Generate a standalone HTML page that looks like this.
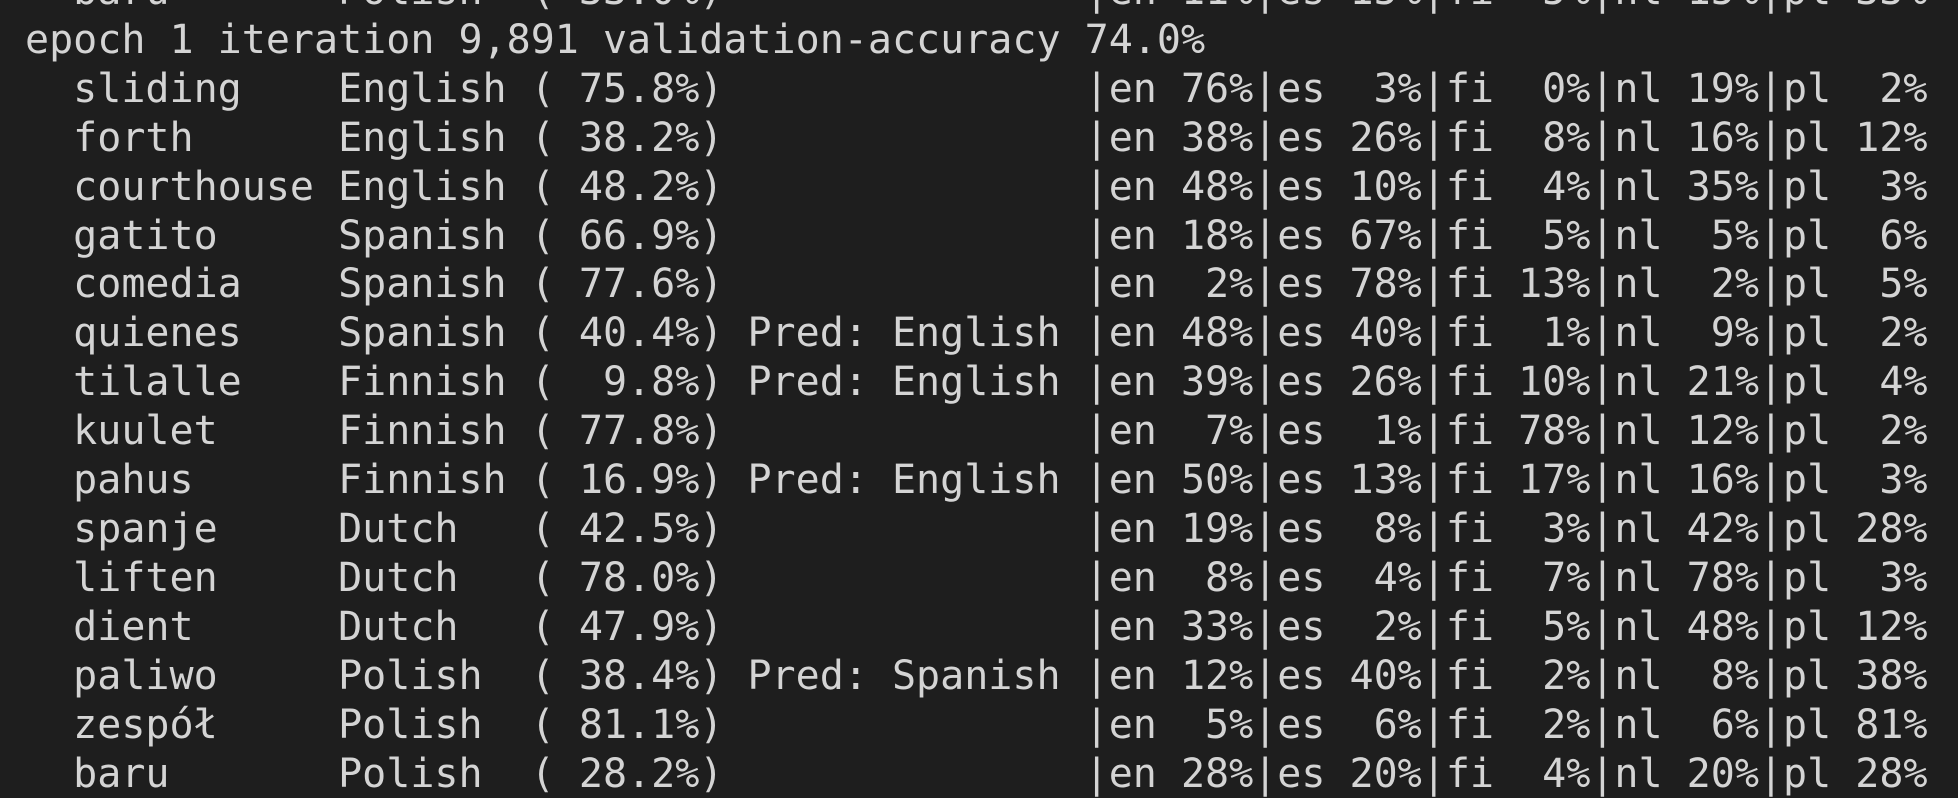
<!DOCTYPE html>
<html><head><meta charset="utf-8"><style>
html,body{margin:0;padding:0;background:#1e1e1e;width:1958px;height:796px;overflow:hidden}
pre{position:absolute;left:25px;top:-33px;margin:0;font-family:"DejaVu Sans Mono","Liberation Mono",monospace;font-size:40px;line-height:48.9px;color:#d4d4d4;white-space:pre}
</style></head><body><pre>  baru       Polish  ( 33.0%)               |en 11%|es 15%|fi  5%|nl 15%|pl 33%
epoch 1 iteration 9,891 validation-accuracy 74.0%
  sliding    English ( 75.8%)               |en 76%|es  3%|fi  0%|nl 19%|pl  2%
  forth      English ( 38.2%)               |en 38%|es 26%|fi  8%|nl 16%|pl 12%
  courthouse English ( 48.2%)               |en 48%|es 10%|fi  4%|nl 35%|pl  3%
  gatito     Spanish ( 66.9%)               |en 18%|es 67%|fi  5%|nl  5%|pl  6%
  comedia    Spanish ( 77.6%)               |en  2%|es 78%|fi 13%|nl  2%|pl  5%
  quienes    Spanish ( 40.4%) Pred: English |en 48%|es 40%|fi  1%|nl  9%|pl  2%
  tilalle    Finnish (  9.8%) Pred: English |en 39%|es 26%|fi 10%|nl 21%|pl  4%
  kuulet     Finnish ( 77.8%)               |en  7%|es  1%|fi 78%|nl 12%|pl  2%
  pahus      Finnish ( 16.9%) Pred: English |en 50%|es 13%|fi 17%|nl 16%|pl  3%
  spanje     Dutch   ( 42.5%)               |en 19%|es  8%|fi  3%|nl 42%|pl 28%
  liften     Dutch   ( 78.0%)               |en  8%|es  4%|fi  7%|nl 78%|pl  3%
  dient      Dutch   ( 47.9%)               |en 33%|es  2%|fi  5%|nl 48%|pl 12%
  paliwo     Polish  ( 38.4%) Pred: Spanish |en 12%|es 40%|fi  2%|nl  8%|pl 38%
  zespół     Polish  ( 81.1%)               |en  5%|es  6%|fi  2%|nl  6%|pl 81%
  baru       Polish  ( 28.2%)               |en 28%|es 20%|fi  4%|nl 20%|pl 28%</pre></body></html>
